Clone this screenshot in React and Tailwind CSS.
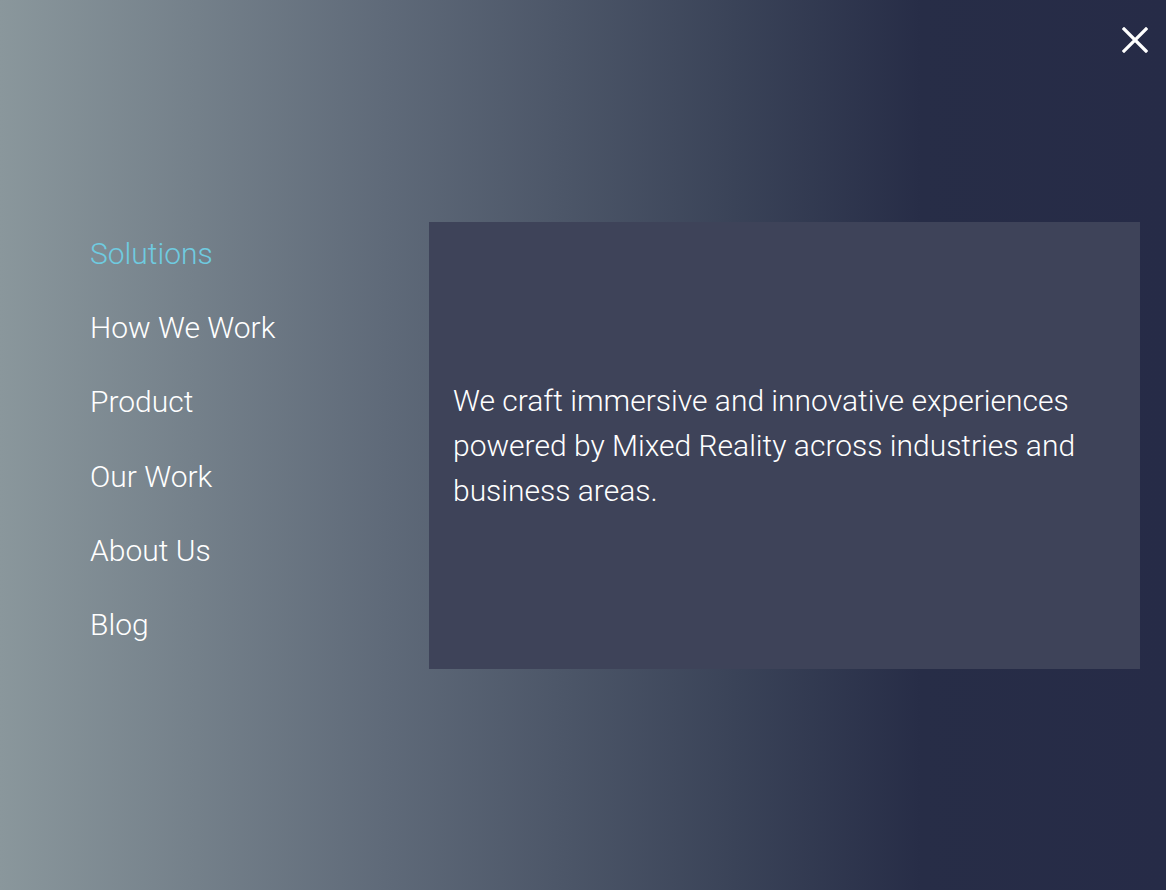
import React from 'react';

const navItems = ['Solutions', 'How We Work', 'Product', 'Our Work', 'About Us', 'Blog'];

export default function App() {
  return (
    <div
      className="relative w-full h-[890px] overflow-hidden bg-[linear-gradient(to_right,#8a979c_0%,#5f6a79_33%,#3a4358_63%,#272d47_79%,#262b47_100%)]"
      style={{ fontFamily: 'Roboto, "Liberation Sans", sans-serif' }}
    >
      <button className="absolute top-[27px] right-[18px] w-[26px] h-[26px] text-white" aria-label="Close menu">
        <svg viewBox="0 0 26 26" className="w-full h-full" fill="none" stroke="currentColor" strokeWidth="3.2" strokeLinecap="square">
          <path d="M2 2 L24 24 M24 2 L2 24" />
        </svg>
      </button>

      <div className="flex pl-[90px] pt-[216px]">
        <nav className="w-[339px] flex flex-col">
          {navItems.map((item, i) => (
            <a
              key={item}
              href="#"
              className={`h-[74.3px] flex items-center text-[30px] font-light ${
                i === 0 ? 'text-[#6fcbe0]' : 'text-white'
              }`}
            >
              {item}
            </a>
          ))}
        </nav>

        <div className="mt-[6px] w-[711px] h-[447px] bg-[#3e4359] flex items-center pl-[24px] pr-[40px]">
          <p className="text-[30px] font-light leading-[45px] text-white">
            We craft immersive and innovative experiences powered by Mixed Reality across industries and business areas.
          </p>
        </div>
      </div>
    </div>
  );
}
